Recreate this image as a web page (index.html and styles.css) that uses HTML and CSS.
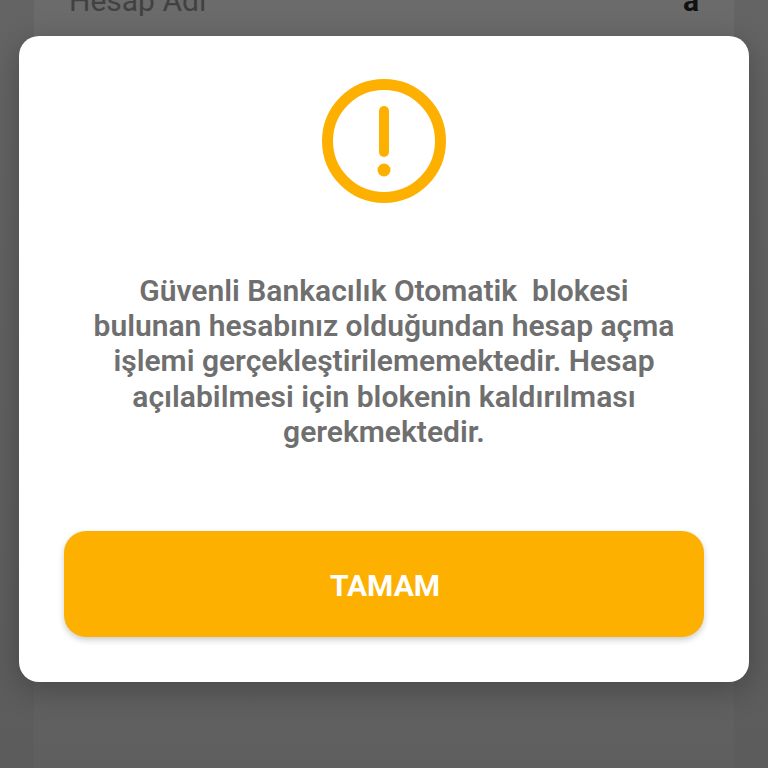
FILE: index.html
```html
<!DOCTYPE html>
<html lang="tr">
<head>
    <meta charset="UTF-8">
    <meta name="viewport" content="width=device-width, initial-scale=1.0">
    <title>Hesap</title>
    <link rel="stylesheet" href="styles.css">
</head>
<body>
    <div class="page">
        <div class="account-row">
            <span class="account-label">Hesap Adı</span>
            <span class="account-value">a</span>
        </div>
    </div>
    <div class="overlay">
        <div class="dialog">
            <svg class="dialog-icon" viewBox="0 0 124 124" width="124" height="124">
                <circle cx="62" cy="62" r="56.5" fill="none" stroke="#fdb000" stroke-width="11"/>
                <rect x="57" y="27" width="10" height="51" rx="5" fill="#fdb000"/>
                <circle cx="62" cy="91" r="6.5" fill="#fdb000"/>
            </svg>
            <p class="dialog-text">Güvenli Bankacılık Otomatik&nbsp; blokesi<br>bulunan hesabınız olduğundan hesap açma<br>işlemi gerçekleştirilememektedir. Hesap<br>açılabilmesi için blokenin kaldırılması<br>gerekmektedir.</p>
            <button class="dialog-button">TAMAM</button>
        </div>
    </div>
</body>
</html>
```

FILE: styles.css
```css
html,
body {
    margin: 0;
    height: 100%;
    font-family: Roboto, sans-serif;
    background: linear-gradient(#646464, #5c5c5c);
    overflow: hidden;
}

.page {
    height: 768px;
    margin: 0 34px;
    background: linear-gradient(#6b6b6b, #5f5f5f);
}

.account-row {
    display: flex;
    justify-content: space-between;
    height: 16px;
    padding: 0 35px;
    font-size: 30px;
    line-height: 2px;
    overflow: hidden;
}

.account-label {
    color: #414141;
}

.account-value {
    color: #111;
    font-weight: 700;
}

.overlay {
    position: absolute;
    top: 36px;
    left: 19px;
    width: 730px;
}

.dialog {
    display: flex;
    flex-direction: column;
    align-items: center;
    height: 646px;
    box-sizing: border-box;
    padding-top: 43px;
    background-color: #fff;
    border-radius: 20px;
    box-shadow: 0 8px 30px rgba(0, 0, 0, 0.26);
}

.dialog-icon {
    display: block;
    flex-shrink: 0;
}

.dialog-text {
    margin: 70px 0 0;
    color: #6f6f6f;
    font-size: 30px;
    font-weight: 600;
    line-height: 35.2px;
    text-align: center;
}

.dialog-button {
    flex-shrink: 0;
    width: 640px;
    height: 106px;
    margin-top: 82px;
    padding: 2px 0 0 2px;
    border: 0;
    border-radius: 22px;
    background-color: #fdb000;
    box-shadow: 0 3px 6px rgba(0, 0, 0, 0.2);
    color: #fff;
    font-family: Roboto, sans-serif;
    font-size: 30px;
    font-weight: 700;
}
```
